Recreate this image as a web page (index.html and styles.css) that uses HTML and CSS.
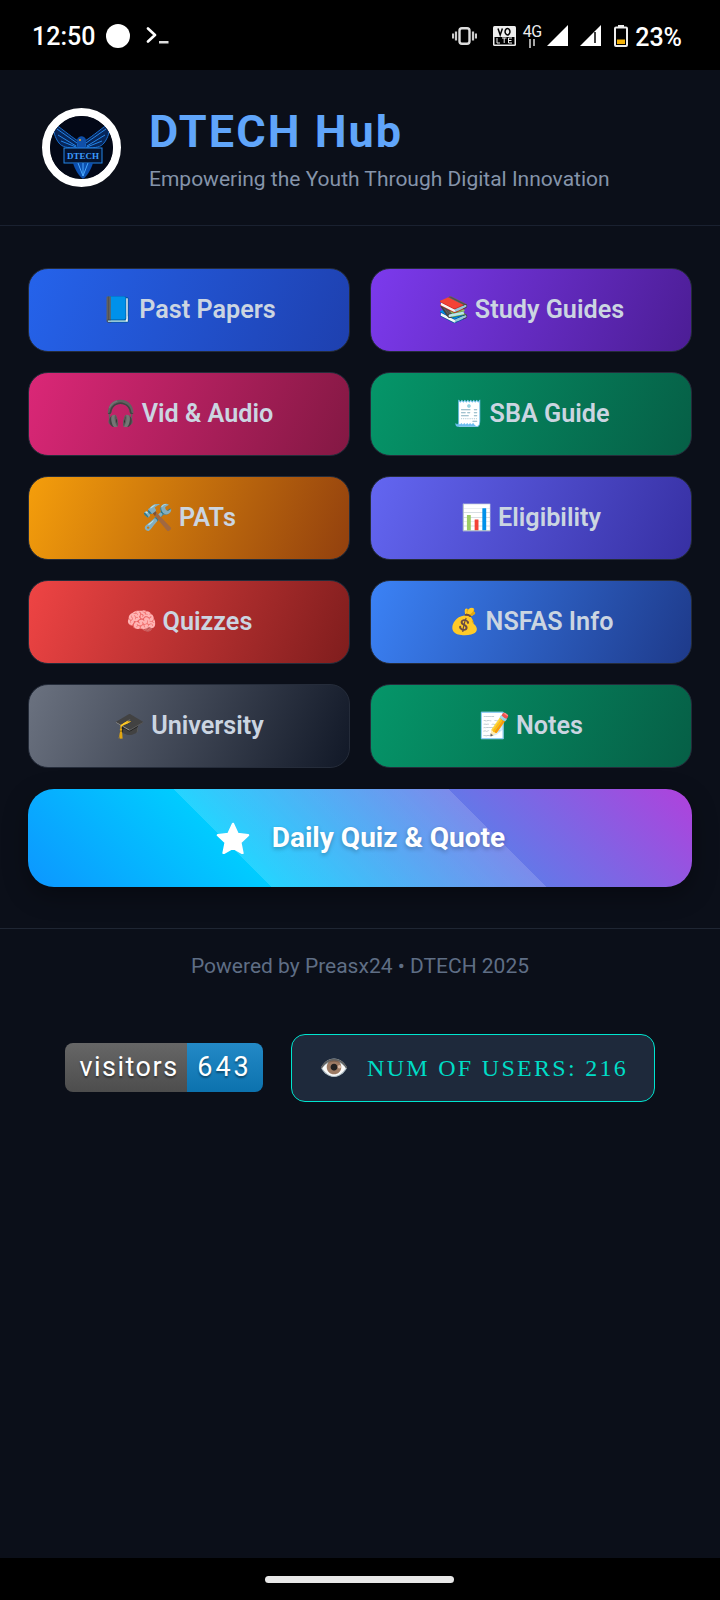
FILE: index.html
```html
<!DOCTYPE html>
<html lang="en">
<head>
<meta charset="utf-8">
<title>DTECH Hub</title>
<link rel="stylesheet" href="styles.css">
</head>
<body>
<div class="screen">
  <div class="status">
    <div class="status-left">
      <span class="clock">12:50</span>
      <span class="dot"></span>
      <svg class="term" width="23" height="17" viewBox="0 0 23 17"><path d="M2 1.500 9 8 2 14.500" fill="none" stroke="#fff" stroke-width="2.600" stroke-linecap="round" stroke-linejoin="round"/><rect x="13" y="14" width="9.500" height="2.500" fill="#ddd"/></svg>
    </div>
    <div class="status-right">
      <svg class="vib" width="25" height="18" viewBox="0 0 25 18"><rect x="7.500" y="1.200" width="10" height="15.600" rx="2.500" fill="none" stroke="#ddd" stroke-width="2.400"/><path d="M4 4.500v9M1 6.500v5M21 4.500v9M24 6.500v5" stroke="#ccc" stroke-width="2.200" fill="none"/></svg>
      <svg class="volte" width="23" height="20" viewBox="0 0 23 20"><rect width="23" height="20" rx="1.500" fill="#eee"/><rect x="1.500" y="11" width="20" height="7.500" fill="#000"/><path d="M5 2.500 7.200 9 9.400 2.500M14.500 2.500a2.400 3.200 0 1 0 .01 0Z" fill="none" stroke="#000" stroke-width="1.500"/><path d="M4 12v5h3M9 12h4.500M11.200 12v5M19 12h-3.500v5H19M15.500 14.500H18.500" fill="none" stroke="#eee" stroke-width="1"/></svg>
      <div class="net">
        <span class="net-label">4G</span>
        <svg class="net-arrows" width="8" height="9" viewBox="0 0 8 9"><path d="M2 0v9M6 0v7" stroke="#ddd" stroke-width="1.500"/></svg>
      </div>
      <svg class="sig" width="21" height="21" viewBox="0 0 21 21"><path d="M21 0V21H0Z" fill="#fff"/></svg>
      <svg class="sig sig2" width="21" height="21" viewBox="0 0 21 21"><path d="M21 0V21H0Z" fill="#fff"/><path d="M15 7v11" stroke="#000" stroke-width="1.500"/></svg>
      <svg class="batt" width="14" height="22" viewBox="0 0 14 22"><rect x="4" y="0" width="6" height="2" fill="#eee"/><rect x="1" y="2.500" width="12" height="18.500" rx="1" fill="none" stroke="#eee" stroke-width="2"/><rect x="3" y="14.500" width="8" height="4.500" fill="#f2b10a"/></svg>
      <span class="pct">23%</span>
    </div>
  </div>

  <header class="hero">
    <div class="logo">
      <svg width="63" height="63" viewBox="0 0 63 63">
        <circle cx="31.500" cy="31.500" r="31.500" fill="#030817"/>
        <path d="M3 7c0 8 2 15 6 20 3 4 8 5 18 5l1-7C20 20 10 11 3 7ZM60 7c0 8-2 15-6 20-3 4-8 5-18 5l-1-7C43 20 53 11 60 7Z" fill="#07265a" stroke="#1a6fd0" stroke-width="1"/>
        <path d="M7 13l20 14M8 19l18 11M11 25l15 6M56 13 36 27M55 19 37 30M52 25l-15 6" stroke="#2486ea" stroke-width="1" fill="none"/>
        <path d="M27 24c1-5 8-5 9 0l-1 8h-7Z" fill="#0f4fa8"/>
        <circle cx="30" cy="24" r="1.100" fill="#e0a030"/>
        <rect x="14" y="32" width="38" height="15" fill="#05132e" stroke="#2486ea" stroke-width="1"/>
        <text class="logo-word" x="33" y="42.500">DTECH</text>
        <path d="M23 47c2 7 6 13 10 16 4-3 8-9 10-16Z" fill="#0b4fb0"/>
        <path d="M28 47l5 13 5-13M33 47v13" fill="none" stroke="#4aa8ff" stroke-width="1"/>
      </svg>
    </div>
    <div class="hero-text">
      <h1 class="title">DTECH Hub</h1>
      <p class="subtitle">Empowering the Youth Through Digital Innovation</p>
    </div>
  </header>

  <main class="content">
    <nav class="grid">
      <a class="btn blue"><span class="emo">📘</span> Past Papers</a>
      <a class="btn violet"><span class="emo">📚</span> Study Guides</a>
      <a class="btn pink"><span class="emo">🎧</span> Vid &amp; Audio</a>
      <a class="btn green"><span class="emo">🧾</span> SBA Guide</a>
      <a class="btn amber"><span class="emo">🛠️</span> PATs</a>
      <a class="btn indigo"><span class="emo">📊</span> Eligibility</a>
      <a class="btn red"><span class="emo">🧠</span> Quizzes</a>
      <a class="btn sky"><span class="emo">💰</span> NSFAS Info</a>
      <a class="btn gray"><span class="emo">🎓</span> University</a>
      <a class="btn green"><span class="emo">📝</span> Notes</a>
    </nav>
    <a class="daily">
      <svg class="star" width="34" height="32" viewBox="0 0 34 32"><path d="M17 2l4.600 10 10.400 1.200-7.700 7.200 2.100 10.600L17 25.700 7.600 31l2.100-10.600L2 13.200 12.400 12Z" fill="#fff" stroke="#fff" stroke-width="2.500" stroke-linejoin="round"/></svg>
      <span class="daily-label">Daily Quiz &amp; Quote</span>
    </a>
  </main>

  <footer class="foot">Powered by Preasx24 • DTECH 2025</footer>

  <section class="stats">
    <div class="badge"><span class="badge-l">visitors</span><span class="badge-r">643</span></div>
    <div class="counter"><span class="counter-emo">👁️</span><span class="counter-text">NUM OF USERS: 216</span></div>
  </section>

  <div class="spacer"></div>
  <div class="navbar"><span class="pill"></span></div>
</div>
</body>
</html>
```
FILE: styles.css
```css
* { box-sizing: border-box; }
html, body { margin: 0; padding: 0; }
body { background: #0b0f19; font-family: Roboto, "Liberation Sans", sans-serif; }
.screen { width: 720px; height: 1600px; display: flex; flex-direction: column; background: #0b0f19; }

.status { height: 70px; flex: none; background: #000; color: #fff; display: flex; justify-content: space-between; align-items: center; padding: 1px 38px 0 32px; }
.status-left, .status-right { display: flex; align-items: center; }
.clock { font-size: 25px; font-weight: 500; line-height: 1; margin-top: 2px; }
.dot { width: 24px; height: 24px; border-radius: 50%; background: #fff; margin-left: 11px; }
.term { margin-left: 16px; }
.vib { margin-right: 16px; }
.volte { margin-right: 7px; }
.net { width: 18px; height: 24px; margin-right: 6px; display: flex; flex-direction: column; align-items: center; }
.net-label { font-size: 16px; line-height: 15px; letter-spacing: -.5px; color: #eee; }
.net-arrows { display: block; }
.sig2 { margin-left: 12px; }
.batt { margin-left: 13px; }
.pct { font-size: 25px; font-weight: 500; line-height: 1; margin-left: 7px; margin-top: 3px; }

.hero { height: 156px; flex: none; display: flex; align-items: center; padding: 0 42px; gap: 28px; border-bottom: 1px solid #1a2130; }
.logo { width: 79px; height: 79px; border: 8px solid #fff; border-radius: 50%; overflow: hidden; flex: none; background: #030817; }
.logo svg { display: block; }
.logo-word { font-family: "Liberation Serif", serif; font-size: 9px; font-weight: 700; fill: #3c9cff; text-anchor: middle; }
.hero-text { display: flex; flex-direction: column; padding-top: 2px; }
.title { margin: 0; font-size: 45px; line-height: 52px; font-weight: 700; color: #60a5fa; letter-spacing: 2.050px; }
.subtitle { margin: 8px 0 0; font-size: 21px; line-height: 26px; color: #8594aa; }

.content { padding: 42px 28px 0; }
.grid { display: grid; grid-template-columns: 1fr 1fr; gap: 20px; }
.btn { height: 84px; border-radius: 20px; border: 1px solid #252c3a; padding-bottom: 2px; display: flex; align-items: center; justify-content: center; gap: 6px; font-size: 25.200px; font-weight: 600; color: #cbd5e1; }
.emo { font-size: 25px; }
.blue { background: linear-gradient(112deg, #2563eb, #1e40af); }
.violet { background: linear-gradient(112deg, #7c3aed, #4c1d95); }
.pink { background: linear-gradient(112deg, #db2777, #831843); }
.green { background: linear-gradient(112deg, #059669, #065f46); }
.amber { background: linear-gradient(112deg, #f59e0b, #92400e); }
.indigo { background: linear-gradient(112deg, #6366f1, #3730a3); }
.red { background: linear-gradient(112deg, #ef4444, #7f1d1d); }
.sky { background: linear-gradient(112deg, #3b82f6, #1e3a8a); }
.gray { background: linear-gradient(112deg, #6b7280, #111827); }

.daily { position: relative; height: 98px; margin-top: 21px; border-radius: 26px; overflow: hidden; display: flex; align-items: center; justify-content: center; gap: 22px; padding: 0 0 1px 1px; background: linear-gradient(45deg, #0d96ff 0%, #00ccff 32%, #6577e8 68%, #b041dc 100%); box-shadow: 0 8px 24px rgba(0,0,0,.35); }
.daily::before { content: ""; position: absolute; inset: 0; background: linear-gradient(45deg, transparent 32%, rgba(255,255,255,.15) 32%, rgba(255,255,255,.15) 68%, transparent 68%); }
.star, .daily-label { position: relative; }
.daily-label { font-size: 28px; font-weight: 700; color: #fff; text-shadow: 0 2px 4px rgba(0,0,0,.25); }

.foot { margin-top: 41px; border-top: 1px solid #1f2633; padding-top: 25px; text-align: center; font-size: 21px; line-height: 24px; color: #5f6e85; }

.stats { display: flex; align-items: center; padding: 0 65px; margin-top: 56px; gap: 28px; }
.badge { display: flex; height: 49px; margin-bottom: 2px; border-radius: 8px; overflow: hidden; color: #fff; font-size: 27px; text-shadow: 0 2px 2px rgba(0,0,0,.4); }
.badge-l { width: 122px; padding-left: 6px; letter-spacing: 1.500px; display: flex; align-items: center; justify-content: center; background: linear-gradient(#666, #4d4d4d); }
.badge-r { width: 76px; padding-right: 1px; letter-spacing: 3px; display: flex; align-items: center; justify-content: center; background: linear-gradient(#2389c6, #0c72ae); }
.counter { width: 364px; height: 68px; border: 1px solid #00e5cf; border-radius: 14px; background: #1e293b; display: flex; align-items: center; gap: 18px; padding-left: 27px; }
.counter-emo { font-size: 24px; }
.counter-text { font-family: "Liberation Serif", serif; font-size: 24px; letter-spacing: 2.300px; color: #00dcc6; }

.spacer { flex: 1; }
.navbar { height: 42px; flex: none; background: #000; display: flex; align-items: center; justify-content: center; padding-right: 2px; }
.pill { width: 189px; height: 7px; border-radius: 4px; background: #e8e8e8; }
```
